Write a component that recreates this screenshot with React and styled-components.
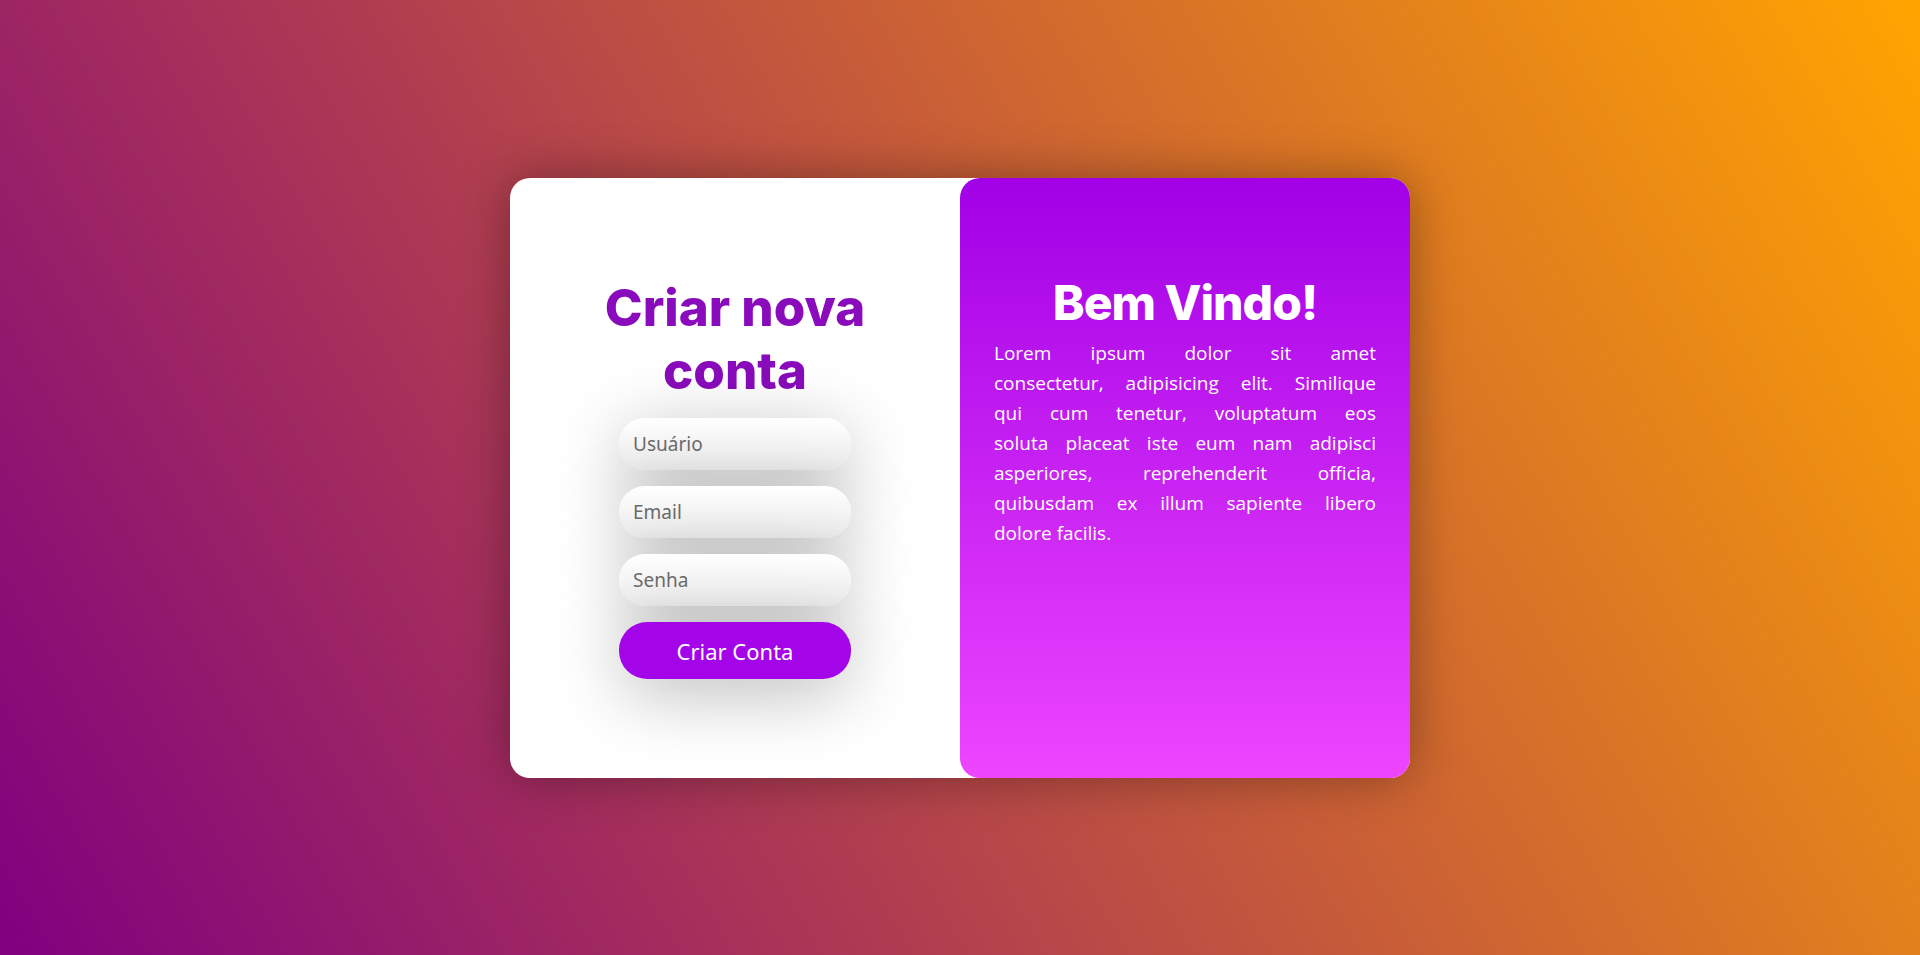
import React from "react";
import styled, { createGlobalStyle } from "styled-components";

const GlobalStyle = createGlobalStyle`
  * { box-sizing: border-box; }
  html, body { margin: 0; padding: 0; }
  body {
    min-height: 100vh;
    background: linear-gradient(60deg, #800080, #ffa500);
    font-family: "Open Sans", "Noto Sans", sans-serif;
  }
`;

const Page = styled.main`
  height: 100vh;
  display: flex;
  align-items: center;
  justify-content: center;
`;

const Card = styled.section`
  width: 900px;
  height: 600px;
  display: grid;
  grid-template-columns: 1fr 1fr;
  background: #fff;
  border-radius: 20px;
  box-shadow: 0 0 50px rgba(0, 0, 0, 0.35);
`;

const FormPanel = styled.form`
  display: flex;
  flex-direction: column;
  align-items: center;
  justify-content: center;
  gap: 16px;
`;

const Heading = styled.h1`
  margin: 0 auto;
  max-width: 340px;
  font-family: Inter, "Open Sans", sans-serif;
  font-weight: 800;
  font-size: ${(p) => (p.$light ? "48px" : "51px")};
  letter-spacing: ${(p) => (p.$light ? "-1px" : "0")};
  line-height: 63px;
  text-align: center;
  color: ${(p) => (p.$light ? "#ffffff" : "#890bbb")};
`;

const Field = styled.input`
  width: 232px;
  height: 52px;
  border: none;
  outline: none;
  border-radius: 26px;
  padding: 0 14px;
  font-family: "Noto Sans", "Open Sans", sans-serif;
  font-size: 19px;
  color: #555;
  background: linear-gradient(to bottom, #ffffff, #ececec);
  box-shadow: 0 14px 70px rgba(0, 0, 0, 0.28);
  &::placeholder { color: #6b6b6b; }
`;

const Submit = styled.button`
  width: 232px;
  height: 57px;
  border: none;
  border-radius: 28px;
  background: #a305e8;
  color: #fff;
  font-family: "Noto Sans", "Open Sans", sans-serif;
  font-size: 22px;
  cursor: pointer;
  box-shadow: 0 14px 70px rgba(0, 0, 0, 0.28);
`;

const WelcomePanel = styled.aside`
  border-radius: 20px;
  background: linear-gradient(to bottom, #a200e6, #ee45ff);
  padding: 93px 34px 0;
  color: #fff;
`;

const Text = styled.p`
  margin: 4px 0 0;
  font-family: "Open Sans", sans-serif;
  font-size: 19px;
  line-height: 30px;
`;

const Line = styled.span`
  display: block;
  white-space: nowrap;
  text-align: ${(p) => (p.$last ? "left" : "justify")};
  text-align-last: ${(p) => (p.$last ? "left" : "justify")};
`;

const lines = [
  "Lorem ipsum dolor sit amet",
  "consectetur, adipisicing elit. Similique",
  "qui cum tenetur, voluptatum eos",
  "soluta placeat iste eum nam adipisci",
  "asperiores, reprehenderit officia,",
  "quibusdam ex illum sapiente libero",
  "dolore facilis.",
];

export default function App() {
  return (
    <>
      <GlobalStyle />
      <Page>
        <Card>
          <FormPanel onSubmit={(e) => e.preventDefault()}>
            <Heading>Criar nova conta</Heading>
            <Field type="text" placeholder="Usuário" />
            <Field type="email" placeholder="Email" />
            <Field type="password" placeholder="Senha" />
            <Submit type="submit">Criar Conta</Submit>
          </FormPanel>
          <WelcomePanel>
            <Heading as="h2" $light>Bem Vindo!</Heading>
            <Text>
              {lines.map((l, i) => (
                <Line key={i} $last={i === lines.length - 1}>{l}</Line>
              ))}
            </Text>
          </WelcomePanel>
        </Card>
      </Page>
    </>
  );
}
